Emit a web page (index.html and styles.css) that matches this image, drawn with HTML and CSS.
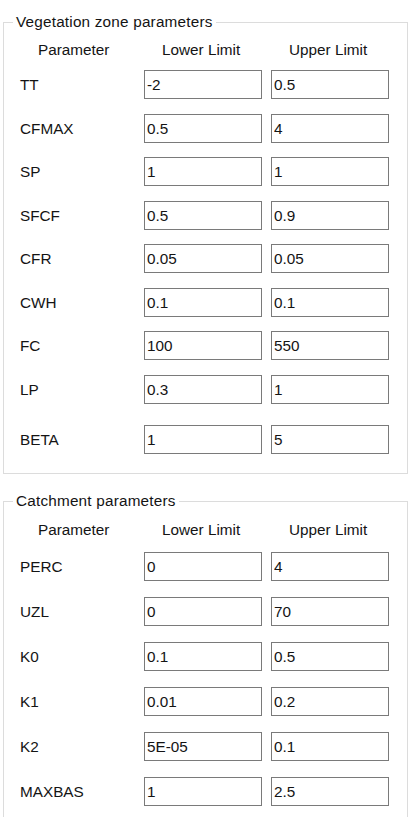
FILE: index.html
```html
<!DOCTYPE html>
<html>
<head>
<meta charset="utf-8">
<link rel="stylesheet" href="styles.css">
</head>
<body>
<div class="page">
  <fieldset class="group group-veg">
    <legend>Vegetation zone parameters</legend>
    <div class="head">
      <span>Parameter</span><span>Lower Limit</span><span>Upper Limit</span>
    </div>
    <div class="rows rows-veg">
      <div class="row"><span class="lbl">TT</span><input class="box" value="-2" readonly><input class="box" value="0.5" readonly></div>
      <div class="row"><span class="lbl">CFMAX</span><input class="box" value="0.5" readonly><input class="box" value="4" readonly></div>
      <div class="row"><span class="lbl">SP</span><input class="box" value="1" readonly><input class="box" value="1" readonly></div>
      <div class="row"><span class="lbl">SFCF</span><input class="box" value="0.5" readonly><input class="box" value="0.9" readonly></div>
      <div class="row"><span class="lbl">CFR</span><input class="box" value="0.05" readonly><input class="box" value="0.05" readonly></div>
      <div class="row"><span class="lbl">CWH</span><input class="box" value="0.1" readonly><input class="box" value="0.1" readonly></div>
      <div class="row"><span class="lbl">FC</span><input class="box" value="100" readonly><input class="box" value="550" readonly></div>
      <div class="row"><span class="lbl">LP</span><input class="box" value="0.3" readonly><input class="box" value="1" readonly></div>
      <div class="row row-beta"><span class="lbl">BETA</span><input class="box" value="1" readonly><input class="box" value="5" readonly></div>
    </div>
  </fieldset>
  <fieldset class="group group-catch">
    <legend>Catchment parameters</legend>
    <div class="head">
      <span>Parameter</span><span>Lower Limit</span><span>Upper Limit</span>
    </div>
    <div class="rows rows-catch">
      <div class="row"><span class="lbl">PERC</span><input class="box" value="0" readonly><input class="box" value="4" readonly></div>
      <div class="row"><span class="lbl">UZL</span><input class="box" value="0" readonly><input class="box" value="70" readonly></div>
      <div class="row"><span class="lbl">K0</span><input class="box" value="0.1" readonly><input class="box" value="0.5" readonly></div>
      <div class="row"><span class="lbl">K1</span><input class="box" value="0.01" readonly><input class="box" value="0.2" readonly></div>
      <div class="row"><span class="lbl">K2</span><input class="box" value="5E-05" readonly><input class="box" value="0.1" readonly></div>
      <div class="row"><span class="lbl">MAXBAS</span><input class="box" value="1" readonly><input class="box" value="2.5" readonly></div>
    </div>
  </fieldset>
</div>
</body>
</html>
```
FILE: styles.css
```css
html, body {
  margin: 0;
  padding: 0;
  background: #ffffff;
}
.page {
  padding: 13px 0 0 3px;
  font-family: "Liberation Sans", Arial, sans-serif;
  font-size: 15.3px;
  color: #141414;
}
.group {
  box-sizing: border-box;
  width: 405px;
  margin: 0;
  padding: 0 0 0 16px;
  border: 1px solid #dcdcdc;
  min-inline-size: 0;
}
.group legend {
  margin-left: -7px;
  padding: 0 3px;
  line-height: 18px;
  font-size: 15.3px;
  letter-spacing: 0.2px;
}
.group-veg {
  padding-bottom: 19px;
}
.group-catch {
  margin-top: 18px;
  padding-bottom: 40px;
}
.head,
.row {
  display: grid;
  grid-template-columns: 115px 118px 118px;
  column-gap: 9px;
}
.head {
  line-height: 18px;
  margin-top: 10px;
}
.group-catch .head {
  margin-top: 11px;
}
.head span {
  padding-left: 18px;
  white-space: nowrap;
}
.rows {
  display: flex;
  flex-direction: column;
}
.rows-veg {
  margin-top: 11px;
  gap: 14.5px;
}
.rows-catch {
  margin-top: 13px;
  gap: 16px;
}
.row-beta {
  margin-top: 7px;
}
.lbl {
  line-height: 28px;
  padding-top: 1px;
}
.box {
  box-sizing: border-box;
  width: 118px;
  height: 29px;
  margin: 0;
  padding: 1px 2px 0;
  border: 1px solid #7a7a7a;
  border-radius: 0;
  background: #ffffff;
  font-family: "Liberation Sans", Arial, sans-serif;
  font-size: 15.3px;
  color: #141414;
  outline: none;
}
```
